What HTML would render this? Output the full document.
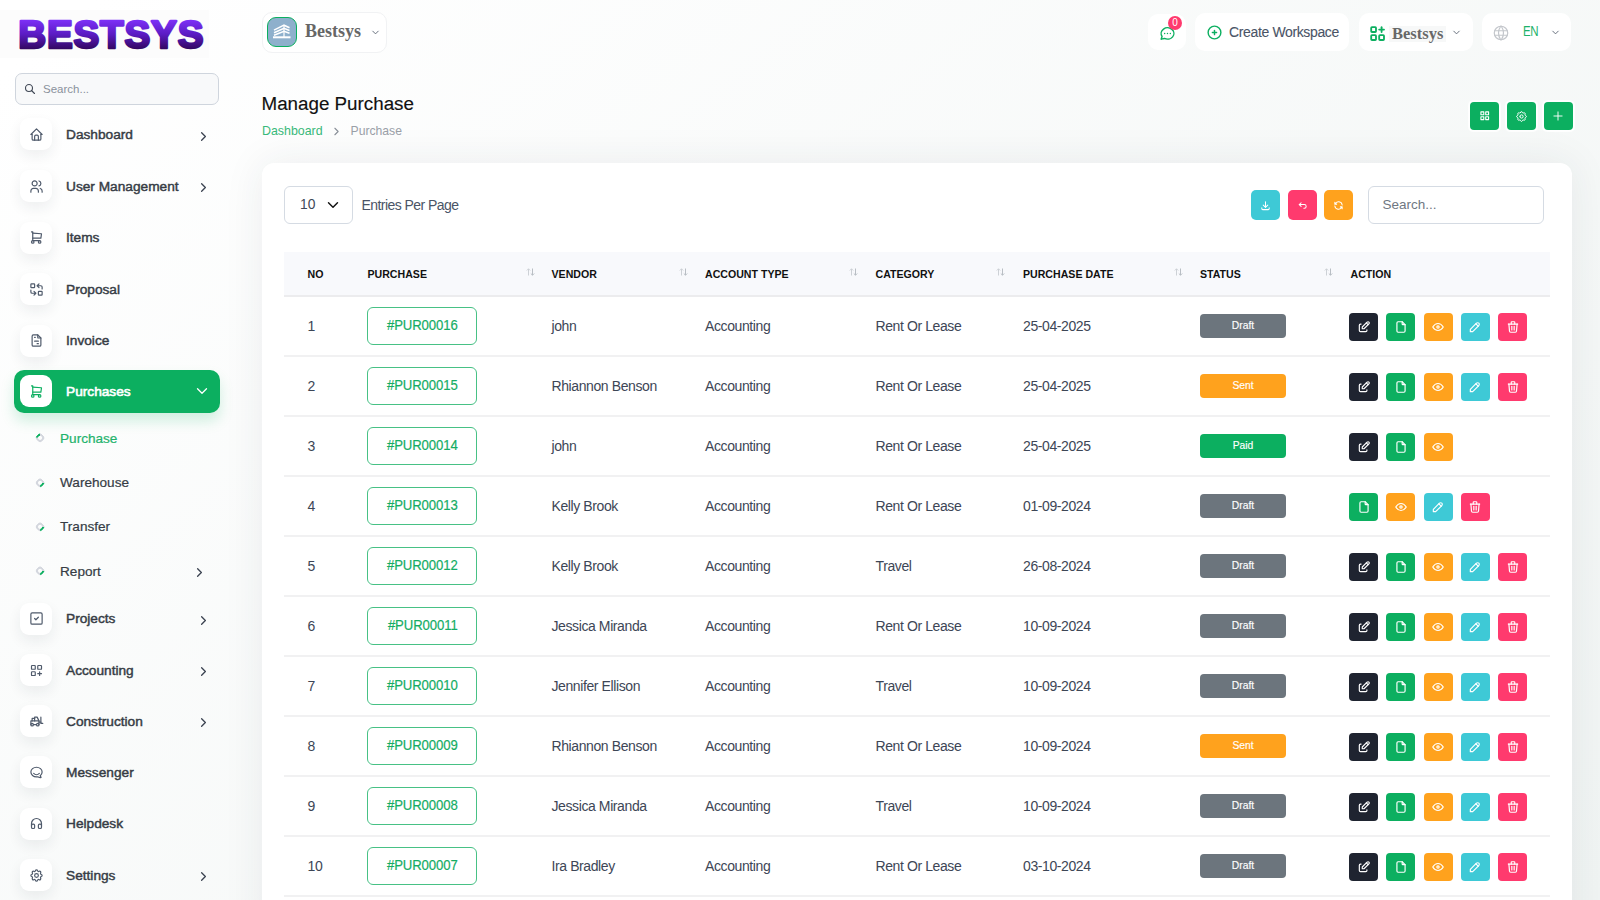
<!DOCTYPE html>
<html><head><meta charset="utf-8"><title>Manage Purchase</title>
<style>
*{box-sizing:border-box;margin:0;padding:0}
html,body{width:1600px;height:900px;overflow:hidden}
body{font-family:"Liberation Sans",sans-serif;position:relative;
 background:linear-gradient(141.55deg,#ffffff 3.46%,#f0f4f3 99.86%);color:#293240}
.abs{position:absolute}
.ic{position:absolute;display:block}
.txt{position:absolute;white-space:nowrap;line-height:1}
.navbox{position:absolute;left:20px;width:32px;height:32px;background:#fff;border-radius:9px;
 box-shadow:0 6px 14px rgba(30,40,60,.07)}
.navt{position:absolute;left:66px;font-size:13.7px;font-weight:400;-webkit-text-stroke:0.45px currentColor;color:#363c45;white-space:nowrap;line-height:1}
.subt{position:absolute;left:60px;font-size:13.6px;-webkit-text-stroke:0.2px currentColor;color:#363c45;white-space:nowrap;line-height:1}
.bul{position:absolute;left:36.3px;width:7.7px;height:7.7px;border-radius:50%;border:2px solid #d4d7de;border-bottom-color:#0caf60;transform:rotate(-45deg)}
.bul.act{border-bottom-color:#d4d7de;border-top-color:#0caf60}
.tbox{position:absolute;background:#fff;border-radius:10px}
.card{position:absolute;left:261.7px;top:163px;width:1310.8px;height:800px;background:#fff;border-radius:12px;
 box-shadow:0 0 40px rgba(40,50,70,.08)}
.th{position:absolute;top:269px;font-size:10.6px;font-weight:700;color:#111;letter-spacing:0;white-space:nowrap;line-height:1}
.sort{position:absolute;top:266px;font-size:9px;color:#c2c6cc;letter-spacing:-1px;line-height:1}
.td{position:absolute;font-size:14px;letter-spacing:-0.4px;color:#3d4656;white-space:nowrap;line-height:1}
.pur{position:absolute;left:367.3px;width:110px;height:38px;border:1px solid #47c185;border-radius:6px;
 color:#14ad64;font-size:14.6px;letter-spacing:-0.1px;text-align:center;line-height:35px;-webkit-text-stroke:0.2px currentColor}
.badge{position:absolute;left:1200px;width:86px;height:24px;border-radius:4px;color:#fff;font-size:10.3px;font-weight:400;-webkit-text-stroke:0.15px #fff;text-align:center;line-height:24px}
.ab{position:absolute;width:29px;height:28px;border-radius:4px}
.sep{position:absolute;left:284px;width:1266px;height:2px;background:#f1f1f2}
</style></head><body>

<div class="abs" style="left:0;top:10px;width:209px;height:48px;background:#fcfcfc"></div>
<svg class="ic" style="left:0;top:0;width:230px;height:70px" viewBox="0 0 230 70"><defs><linearGradient id="lg" x1="0" y1="20" x2="0" y2="49" gradientUnits="userSpaceOnUse"><stop offset="0" stop-color="#7d30f7"/><stop offset="0.5" stop-color="#5a1bc2"/><stop offset="1" stop-color="#330862"/></linearGradient></defs><text x="18.2" y="47.5" font-family="Liberation Sans" font-weight="700" font-size="38.6" letter-spacing="0.85" fill="url(#lg)" stroke="url(#lg)" stroke-width="2.6" stroke-linejoin="round">BESTSYS</text></svg>
<div class="abs" style="left:15px;top:73px;width:204px;height:32px;background:#f8f9fa;border:1px solid #cfd5dd;border-radius:7px"></div>
<svg class="ic" style="left:24px;top:83px;width:12px;height:12px;" viewBox="0 0 24 24" fill="none" stroke="#3f4754" stroke-width="2.2" stroke-linecap="round" stroke-linejoin="round"><path d="M3 10a7 7 0 1 0 14 0a7 7 0 1 0 -14 0"/><path d="M21 21l-6 -6"/></svg>
<div class="txt" style="left:43px;top:84px;font-size:11.5px;color:#8a919c">Search...</div>
<div class="navbox" style="top:118.4px"></div>
<svg class="ic" style="left:29px;top:126.9px;width:15px;height:15px;" viewBox="0 0 24 24" fill="none" stroke="#4f5a6b" stroke-width="1.9" stroke-linecap="round" stroke-linejoin="round"><path d="M5 12l-2 0l9 -9l9 9l-2 0"/><path d="M5 12v7a2 2 0 0 0 2 2h10a2 2 0 0 0 2 -2v-7"/><path d="M9 21v-6a2 2 0 0 1 2 -2h2a2 2 0 0 1 2 2v6"/></svg>
<div class="navt" style="top:127.9px">Dashboard</div>
<svg class="ic" style="left:195.5px;top:128.5px;width:15px;height:15px;" viewBox="0 0 24 24" fill="none" stroke="#3a4250" stroke-width="2.1" stroke-linecap="round" stroke-linejoin="round"><path d="M9 6l6 6l-6 6"/></svg>
<div class="navbox" style="top:170.0px"></div>
<svg class="ic" style="left:29px;top:178.5px;width:15px;height:15px;" viewBox="0 0 24 24" fill="none" stroke="#4f5a6b" stroke-width="1.9" stroke-linecap="round" stroke-linejoin="round"><path d="M5 7a4 4 0 1 0 8 0a4 4 0 1 0 -8 0"/><path d="M3 21v-2a4 4 0 0 1 4 -4h4a4 4 0 0 1 4 4v2"/><path d="M16 3.13a4 4 0 0 1 0 7.75"/><path d="M21 21v-2a4 4 0 0 0 -3 -3.85"/></svg>
<div class="navt" style="top:179.5px">User Management</div>
<svg class="ic" style="left:195.5px;top:180.1px;width:15px;height:15px;" viewBox="0 0 24 24" fill="none" stroke="#3a4250" stroke-width="2.1" stroke-linecap="round" stroke-linejoin="round"><path d="M9 6l6 6l-6 6"/></svg>
<div class="navbox" style="top:221.5px"></div>
<svg class="ic" style="left:29px;top:230.0px;width:15px;height:15px;" viewBox="0 0 24 24" fill="none" stroke="#4f5a6b" stroke-width="1.9" stroke-linecap="round" stroke-linejoin="round"><path d="M4 19a2 2 0 1 0 4 0a2 2 0 1 0 -4 0"/><path d="M15 19a2 2 0 1 0 4 0a2 2 0 1 0 -4 0"/><path d="M17 17h-11v-14h-2"/><path d="M6 5l14 1l-1 7h-13"/></svg>
<div class="navt" style="top:231.0px">Items</div>
<div class="navbox" style="top:273.0px"></div>
<svg class="ic" style="left:29px;top:281.5px;width:15px;height:15px;" viewBox="0 0 24 24" fill="none" stroke="#4f5a6b" stroke-width="1.9" stroke-linecap="round" stroke-linejoin="round"><path d="M3 4a1 1 0 0 1 1 -1h4a1 1 0 0 1 1 1v4a1 1 0 0 1 -1 1h-4a1 1 0 0 1 -1 -1z"/><path d="M15 16a1 1 0 0 1 1 -1h4a1 1 0 0 1 1 1v4a1 1 0 0 1 -1 1h-4a1 1 0 0 1 -1 -1z"/><path d="M21 11v-3a2 2 0 0 0 -2 -2h-6l3 3m0 -6l-3 3"/><path d="M3 13v3a2 2 0 0 0 2 2h6l-3 -3m0 6l3 -3"/></svg>
<div class="navt" style="top:282.5px">Proposal</div>
<div class="navbox" style="top:324.5px"></div>
<svg class="ic" style="left:29px;top:333.0px;width:15px;height:15px;" viewBox="0 0 24 24" fill="none" stroke="#4f5a6b" stroke-width="1.9" stroke-linecap="round" stroke-linejoin="round"><path d="M14 3v4a1 1 0 0 0 1 1h4"/><path d="M17 21h-10a2 2 0 0 1 -2 -2v-14a2 2 0 0 1 2 -2h7l5 5v11a2 2 0 0 1 -2 2z"/><path d="M9 7l1 0"/><path d="M9 13l6 0"/><path d="M13 17l2 0"/></svg>
<div class="navt" style="top:334.0px">Invoice</div>
<div class="navbox" style="top:602.6px"></div>
<svg class="ic" style="left:29px;top:611.1px;width:15px;height:15px;" viewBox="0 0 24 24" fill="none" stroke="#4f5a6b" stroke-width="1.9" stroke-linecap="round" stroke-linejoin="round"><path d="M3 5a2 2 0 0 1 2 -2h14a2 2 0 0 1 2 2v14a2 2 0 0 1 -2 2h-14a2 2 0 0 1 -2 -2z"/><path d="M9 12l2 2l4 -4"/></svg>
<div class="navt" style="top:612.1px">Projects</div>
<svg class="ic" style="left:195.5px;top:612.7px;width:15px;height:15px;" viewBox="0 0 24 24" fill="none" stroke="#3a4250" stroke-width="2.1" stroke-linecap="round" stroke-linejoin="round"><path d="M9 6l6 6l-6 6"/></svg>
<div class="navbox" style="top:654.0px"></div>
<svg class="ic" style="left:29px;top:662.5px;width:15px;height:15px;" viewBox="0 0 24 24" fill="none" stroke="#4f5a6b" stroke-width="1.9" stroke-linecap="round" stroke-linejoin="round"><path d="M4 5a1 1 0 0 1 1 -1h4a1 1 0 0 1 1 1v4a1 1 0 0 1 -1 1h-4a1 1 0 0 1 -1 -1z"/><path d="M14 5a1 1 0 0 1 1 -1h4a1 1 0 0 1 1 1v4a1 1 0 0 1 -1 1h-4a1 1 0 0 1 -1 -1z"/><path d="M4 15a1 1 0 0 1 1 -1h4a1 1 0 0 1 1 1v4a1 1 0 0 1 -1 1h-4a1 1 0 0 1 -1 -1z"/><path d="M14 17h6m-3 -3v6"/></svg>
<div class="navt" style="top:663.5px">Accounting</div>
<svg class="ic" style="left:195.5px;top:664.1px;width:15px;height:15px;" viewBox="0 0 24 24" fill="none" stroke="#3a4250" stroke-width="2.1" stroke-linecap="round" stroke-linejoin="round"><path d="M9 6l6 6l-6 6"/></svg>
<div class="navbox" style="top:705.3px"></div>
<svg class="ic" style="left:29px;top:713.8px;width:15px;height:15px;" viewBox="0 0 24 24" fill="none" stroke="#4f5a6b" stroke-width="1.9" stroke-linecap="round" stroke-linejoin="round"><path d="M3 17a2 2 0 1 0 4 0a2 2 0 1 0 -4 0"/><path d="M12 17a2 2 0 1 0 4 0a2 2 0 1 0 -4 0"/><path d="M7 17l5 0"/><path d="M3 17v-6h13v6"/><path d="M5 11v-4h4"/><path d="M9 11v-6h4l3 6"/><path d="M22 15h-3v-10"/><path d="M16 13l3 0"/></svg>
<div class="navt" style="top:714.8px">Construction</div>
<svg class="ic" style="left:195.5px;top:715.4px;width:15px;height:15px;" viewBox="0 0 24 24" fill="none" stroke="#3a4250" stroke-width="2.1" stroke-linecap="round" stroke-linejoin="round"><path d="M9 6l6 6l-6 6"/></svg>
<div class="navbox" style="top:756.4px"></div>
<svg class="ic" style="left:29px;top:764.9px;width:15px;height:15px;" viewBox="0 0 24 24" fill="none" stroke="#4f5a6b" stroke-width="1.9" stroke-linecap="round" stroke-linejoin="round"><path d="M17.802 17.292s.077 -.055 .2 -.149c1.843 -1.425 3 -3.49 3 -5.789c0 -4.286 -4.03 -7.764 -9 -7.764c-4.97 0 -9 3.478 -9 7.764c0 4.288 4.03 7.646 9 7.646c.424 0 1.12 -.028 2.088 -.084c1.262 .82 3.104 1.493 4.716 1.493c.499 0 .734 -.41 .414 -.828c-.486 -.596 -1.156 -1.551 -1.416 -2.29z"/><path d="M7.5 13.5c2.5 2.5 6.5 2.5 9 0"/></svg>
<div class="navt" style="top:765.9px">Messenger</div>
<div class="navbox" style="top:807.6px"></div>
<svg class="ic" style="left:29px;top:816.1px;width:15px;height:15px;" viewBox="0 0 24 24" fill="none" stroke="#4f5a6b" stroke-width="1.9" stroke-linecap="round" stroke-linejoin="round"><path d="M4 15a2 2 0 0 1 2 -2h1a2 2 0 0 1 2 2v3a2 2 0 0 1 -2 2h-1a2 2 0 0 1 -2 -2z"/><path d="M15 15a2 2 0 0 1 2 -2h1a2 2 0 0 1 2 2v3a2 2 0 0 1 -2 2h-1a2 2 0 0 1 -2 -2z"/><path d="M4 15v-3a8 8 0 0 1 16 0v3"/></svg>
<div class="navt" style="top:817.1px">Helpdesk</div>
<div class="navbox" style="top:859.0px"></div>
<svg class="ic" style="left:29px;top:867.5px;width:15px;height:15px;" viewBox="0 0 24 24" fill="none" stroke="#4f5a6b" stroke-width="1.9" stroke-linecap="round" stroke-linejoin="round"><path d="M10.325 4.317c.426 -1.756 2.924 -1.756 3.35 0a1.724 1.724 0 0 0 2.573 1.066c1.543 -.94 3.31 .826 2.37 2.37a1.724 1.724 0 0 0 1.065 2.572c1.756 .426 1.756 2.924 0 3.35a1.724 1.724 0 0 0 -1.066 2.573c.94 1.543 -.826 3.31 -2.37 2.37a1.724 1.724 0 0 0 -2.572 1.065c-.426 1.756 -2.924 1.756 -3.35 0a1.724 1.724 0 0 0 -2.573 -1.066c-1.543 .94 -3.31 -.826 -2.37 -2.37a1.724 1.724 0 0 0 -1.065 -2.572c-1.756 -.426 -1.756 -2.924 0 -3.35a1.724 1.724 0 0 0 1.066 -2.573c-.94 -1.543 .826 -3.31 2.37 -2.37c1 .608 2.296 .07 2.572 -1.065z"/><path d="M9 12a3 3 0 1 0 6 0a3 3 0 0 0 -6 0"/></svg>
<div class="navt" style="top:868.5px">Settings</div>
<svg class="ic" style="left:195.5px;top:869.1px;width:15px;height:15px;" viewBox="0 0 24 24" fill="none" stroke="#3a4250" stroke-width="2.1" stroke-linecap="round" stroke-linejoin="round"><path d="M9 6l6 6l-6 6"/></svg>
<div class="abs" style="left:14px;top:369.5px;width:206px;height:43.5px;background:#0caf60;border-radius:10px;box-shadow:0 8px 14px rgba(12,175,96,.18)"></div>
<div class="abs" style="left:20px;top:375px;width:32px;height:32px;background:#fff;border-radius:9px"></div>
<svg class="ic" style="left:29px;top:383.5px;width:15px;height:15px;" viewBox="0 0 24 24" fill="none" stroke="#0caf60" stroke-width="1.9" stroke-linecap="round" stroke-linejoin="round"><path d="M4 19a2 2 0 1 0 4 0a2 2 0 1 0 -4 0"/><path d="M15 19a2 2 0 1 0 4 0a2 2 0 1 0 -4 0"/><path d="M17 17h-11v-14h-2"/><path d="M6 5l14 1l-1 7h-13"/></svg>
<div class="navt" style="top:384.5px;color:#fff;-webkit-text-stroke:0.6px #fff">Purchases</div>
<svg class="ic" style="left:193.3px;top:382.4px;width:18px;height:18px;" viewBox="0 0 24 24" fill="none" stroke="#ffffff" stroke-width="1.7" stroke-linecap="round" stroke-linejoin="round"><path d="M6 9l6 6l6 -6"/></svg>
<div class="bul act" style="top:434.1px"></div>
<div class="subt" style="top:431.5px;color:#1fb36c">Purchase</div>
<div class="bul" style="top:478.6px"></div>
<div class="subt" style="top:476.0px;color:#363c45">Warehouse</div>
<div class="bul" style="top:522.6px"></div>
<div class="subt" style="top:520.0px;color:#363c45">Transfer</div>
<div class="bul" style="top:567.1px"></div>
<div class="subt" style="top:564.5px;color:#363c45">Report</div>
<svg class="ic" style="left:191.5px;top:564.8px;width:15px;height:15px;" viewBox="0 0 24 24" fill="none" stroke="#3a4250" stroke-width="2.1" stroke-linecap="round" stroke-linejoin="round"><path d="M9 6l6 6l-6 6"/></svg>
<div class="tbox" style="left:262px;top:11.5px;width:125px;height:41px;border:1px solid #f1f2f4"></div>
<div class="abs" style="left:267px;top:16.8px;width:30.3px;height:30.4px;background:#8eb0cc;border:1.6px solid #0caf60;border-radius:9px"></div>
<svg class="ic" style="left:264px;top:14px;width:36px;height:36px" viewBox="264 14 36 36" fill="none" stroke="#fff" stroke-linecap="butt"><path d="M274 30.2L284 25.2L289.5 27.8" stroke-width="1.5"/><path d="M274 32.8L284 28.2L289.5 30.5" stroke-width="1.5"/><path d="M274 35.2L284 31.2L289.5 33.2" stroke-width="1.5"/><path d="M284 25.2V37" stroke-width="1.2"/><rect x="273" y="36.3" width="17.5" height="2" fill="#fff" stroke="none"/></svg>
<div class="txt" style="left:305px;top:22px;font-family:'Liberation Serif',serif;font-weight:700;font-size:18px;color:#666;line-height:18px">Bestsys</div>
<svg class="ic" style="left:369.5px;top:27px;width:11px;height:11px;" viewBox="0 0 24 24" fill="none" stroke="#5b6573" stroke-width="2" stroke-linecap="round" stroke-linejoin="round"><path d="M6 9l6 6l6 -6"/></svg>
<div class="tbox" style="left:1148px;top:14px;width:38px;height:36px"></div>
<svg class="ic" style="left:1158.5px;top:24.7px;width:17px;height:17px;" viewBox="0 0 24 24" fill="none" stroke="#0caf60" stroke-width="2" stroke-linecap="round" stroke-linejoin="round"><path d="M3 20l1.3 -3.9c-2.324 -3.437 -1.426 -7.872 2.1 -10.374c3.526 -2.501 8.59 -2.296 11.845 .48c3.255 2.777 3.695 7.266 1.029 10.501c-2.666 3.235 -7.615 4.215 -11.574 2.293l-4.7 1"/><path d="M12 12l0 .01"/><path d="M8 12l0 .01"/><path d="M16 12l0 .01"/></svg>
<div class="abs" style="left:1168px;top:15.8px;width:14px;height:14px;border-radius:50%;background:#ff3a6e;color:#fff;font-size:10px;text-align:center;line-height:14px">0</div>
<div class="tbox" style="left:1195px;top:13px;width:154px;height:38px"></div>
<svg class="ic" style="left:1206px;top:24px;width:17px;height:17px;" viewBox="0 0 24 24" fill="none" stroke="#0caf60" stroke-width="2" stroke-linecap="round" stroke-linejoin="round"><path d="M3 12a9 9 0 1 0 18 0a9 9 0 0 0 -18 0"/><path d="M9 12h6"/><path d="M12 9v6"/></svg>
<div class="txt" style="left:1229px;top:25px;font-size:14px;letter-spacing:-0.36px;color:#4a5466;-webkit-text-stroke:0.1px #4a5466">Create Workspace</div>
<div class="tbox" style="left:1359px;top:13px;width:114px;height:38px"></div>
<svg class="ic" style="left:1368.1px;top:23.6px;width:19.2px;height:19.2px;" viewBox="0 0 24 24" fill="none" stroke="#0caf60" stroke-width="2.3" stroke-linecap="round" stroke-linejoin="round"><path d="M4 5a1 1 0 0 1 1 -1h4a1 1 0 0 1 1 1v4a1 1 0 0 1 -1 1h-4a1 1 0 0 1 -1 -1z"/><path d="M4 15a1 1 0 0 1 1 -1h4a1 1 0 0 1 1 1v4a1 1 0 0 1 -1 1h-4a1 1 0 0 1 -1 -1z"/><path d="M14 15a1 1 0 0 1 1 -1h4a1 1 0 0 1 1 1v4a1 1 0 0 1 -1 1h-4a1 1 0 0 1 -1 -1z"/><path d="M14 7l6 0"/><path d="M17 4l0 6"/></svg>
<div class="abs" style="left:1389px;top:26px;width:56.5px;height:16px;background:#f7f8f8"></div>
<div class="txt" style="left:1392px;top:24.6px;font-family:'Liberation Serif',serif;font-weight:700;font-size:16.5px;color:#686868;line-height:18px">Bestsys</div>
<svg class="ic" style="left:1450.5px;top:27px;width:11px;height:11px;" viewBox="0 0 24 24" fill="none" stroke="#5b6573" stroke-width="2" stroke-linecap="round" stroke-linejoin="round"><path d="M6 9l6 6l6 -6"/></svg>
<div class="tbox" style="left:1482px;top:13px;width:89px;height:38px"></div>
<svg class="ic" style="left:1492px;top:23.5px;width:18px;height:18px;" viewBox="0 0 24 24" fill="none" stroke="#c4c7cc" stroke-width="1.6" stroke-linecap="round" stroke-linejoin="round"><path d="M3 12a9 9 0 1 0 18 0a9 9 0 0 0 -18 0"/><path d="M3.6 9h16.8"/><path d="M3.6 15h16.8"/><path d="M11.5 3a17 17 0 0 0 0 18"/><path d="M12.5 3a17 17 0 0 1 0 18"/></svg>
<div class="txt" style="left:1522.5px;top:24px;font-size:14px;letter-spacing:-0.5px;transform:scaleX(0.82);transform-origin:0 0;color:#1db26a">EN</div>
<svg class="ic" style="left:1549.5px;top:27px;width:11px;height:11px;" viewBox="0 0 24 24" fill="none" stroke="#5b6573" stroke-width="2" stroke-linecap="round" stroke-linejoin="round"><path d="M6 9l6 6l6 -6"/></svg>
<div class="txt" style="left:261.5px;top:94px;font-size:18.8px;color:#111;line-height:19px;-webkit-text-stroke:0.15px #111">Manage Purchase</div>
<div class="txt" style="left:262px;top:125px;font-size:12.4px;color:#39b97a">Dashboard</div>
<svg class="ic" style="left:329.5px;top:124.5px;width:13px;height:13px;" viewBox="0 0 24 24" fill="none" stroke="#8a9099" stroke-width="2" stroke-linecap="round" stroke-linejoin="round"><path d="M9 6l6 6l-6 6"/></svg>
<div class="txt" style="left:350.5px;top:125px;font-size:12.2px;color:#9aa0a8">Purchase</div>
<div class="abs" style="left:1470px;top:102px;width:29px;height:28px;background:#0caf60;border-radius:4px;box-shadow:0 0 1px 1.5px rgba(255,255,255,.9)"></div>
<svg class="ic" style="left:1479px;top:110px;width:11.5px;height:11.5px;" viewBox="0 0 24 24" fill="none" stroke="#fff" stroke-width="2.3" stroke-linecap="round" stroke-linejoin="round"><path d="M4 4h6v6h-6z"/><path d="M14 4h6v6h-6z"/><path d="M4 14h6v6h-6z"/><path d="M14 14h6v6h-6z"/></svg>
<div class="abs" style="left:1507px;top:102px;width:29px;height:28px;background:#0caf60;border-radius:4px;box-shadow:0 0 1px 1.5px rgba(255,255,255,.9)"></div>
<svg class="ic" style="left:1515px;top:109.5px;width:13px;height:13px;" viewBox="0 0 24 24" fill="none" stroke="#fff" stroke-width="1.8" stroke-linecap="round" stroke-linejoin="round"><path d="M10.325 4.317c.426 -1.756 2.924 -1.756 3.35 0a1.724 1.724 0 0 0 2.573 1.066c1.543 -.94 3.31 .826 2.37 2.37a1.724 1.724 0 0 0 1.065 2.572c1.756 .426 1.756 2.924 0 3.35a1.724 1.724 0 0 0 -1.066 2.573c.94 1.543 -.826 3.31 -2.37 2.37a1.724 1.724 0 0 0 -2.572 1.065c-.426 1.756 -2.924 1.756 -3.35 0a1.724 1.724 0 0 0 -2.573 -1.066c-1.543 .94 -3.31 -.826 -2.37 -2.37a1.724 1.724 0 0 0 -1.065 -2.572c-1.756 -.426 -1.756 -2.924 0 -3.35a1.724 1.724 0 0 0 1.066 -2.573c-.94 -1.543 .826 -3.31 2.37 -2.37c1 .608 2.296 .07 2.572 -1.065z"/><path d="M9 12a3 3 0 1 0 6 0a3 3 0 0 0 -6 0"/></svg>
<div class="abs" style="left:1543.5px;top:102px;width:29px;height:28px;background:#0caf60;border-radius:4px;box-shadow:0 0 1px 1.5px rgba(255,255,255,.9)"></div>
<svg class="ic" style="left:1551.0px;top:109px;width:14px;height:14px;" viewBox="0 0 24 24" fill="none" stroke="#fff" stroke-width="1.6" stroke-linecap="round" stroke-linejoin="round"><path d="M12 5l0 14"/><path d="M5 12l14 0"/></svg>
<div class="card"></div>
<div class="abs" style="left:284px;top:186px;width:68.5px;height:38px;border:1px solid #d5dbe3;border-radius:6px;background:#fff"></div>
<div class="txt" style="left:300px;top:198px;font-size:13.8px;color:#3f4858">10</div>
<svg class="ic" style="left:323.5px;top:196px;width:18px;height:18px;" viewBox="0 0 24 24" fill="none" stroke="#111" stroke-width="1.9" stroke-linecap="round" stroke-linejoin="round"><path d="M6 9l6 6l6 -6"/></svg>
<div class="txt" style="left:361.5px;top:197.5px;font-size:14px;letter-spacing:-0.55px;color:#4a5466">Entries Per Page</div>
<div class="abs" style="left:1251px;top:190px;width:29px;height:29.5px;background:#3ec9d6;border-radius:5px"></div>
<svg class="ic" style="left:1260px;top:199.5px;width:11px;height:11px;" viewBox="0 0 24 24" fill="none" stroke="#fff" stroke-width="2.2" stroke-linecap="round" stroke-linejoin="round"><path d="M4 17v2a2 2 0 0 0 2 2h12a2 2 0 0 0 2 -2v-2"/><path d="M7 11l5 5l5 -5"/><path d="M12 4l0 12"/></svg>
<div class="abs" style="left:1287.6px;top:190px;width:29px;height:29.5px;background:#ff3a6e;border-radius:5px"></div>
<svg class="ic" style="left:1296.6px;top:199.5px;width:11px;height:11px;" viewBox="0 0 24 24" fill="none" stroke="#fff" stroke-width="2.2" stroke-linecap="round" stroke-linejoin="round"><path d="M9 14l-4 -4l4 -4"/><path d="M5 10h11a4 4 0 1 1 0 8h-1"/></svg>
<div class="abs" style="left:1324.2px;top:190px;width:29px;height:29.5px;background:#ffa21d;border-radius:5px"></div>
<svg class="ic" style="left:1333.2px;top:199.5px;width:11px;height:11px;" viewBox="0 0 24 24" fill="none" stroke="#fff" stroke-width="2.2" stroke-linecap="round" stroke-linejoin="round"><path d="M20 11a8.1 8.1 0 0 0 -15.5 -2m-.5 -4v4h4"/><path d="M4 13a8.1 8.1 0 0 0 15.5 2m.5 4v-4h-4"/></svg>
<div class="abs" style="left:1367.5px;top:186px;width:176px;height:38px;border:1px solid #d5dbe3;border-radius:6px;background:#fff"></div>
<div class="txt" style="left:1382.5px;top:197.5px;font-size:13.5px;color:#6f7782">Search...</div>
<div class="abs" style="left:284px;top:252px;width:1266px;height:44px;background:#f8f9fc"></div>
<div class="abs" style="left:284px;top:295px;width:1266px;height:1.5px;background:#ececee"></div>
<div class="th" style="left:307.5px">NO</div>
<div class="th" style="left:367.5px">PURCHASE</div>
<svg class="ic" style="left:526px;top:268.3px;width:9px;height:8px" viewBox="0 0 9 8" fill="none" stroke="#cdd1d6" stroke-width="1"><path d="M2.5 7.5V0.8M0.8 2.5L2.5 0.8L4.2 2.5"/><path d="M6.5 0.5V7.2M4.8 5.5L6.5 7.2L8.2 5.5" stroke="#b9bec4"/></svg>
<div class="th" style="left:551.5px">VENDOR</div>
<svg class="ic" style="left:679px;top:268.3px;width:9px;height:8px" viewBox="0 0 9 8" fill="none" stroke="#cdd1d6" stroke-width="1"><path d="M2.5 7.5V0.8M0.8 2.5L2.5 0.8L4.2 2.5"/><path d="M6.5 0.5V7.2M4.8 5.5L6.5 7.2L8.2 5.5" stroke="#b9bec4"/></svg>
<div class="th" style="left:705px">ACCOUNT TYPE</div>
<svg class="ic" style="left:849px;top:268.3px;width:9px;height:8px" viewBox="0 0 9 8" fill="none" stroke="#cdd1d6" stroke-width="1"><path d="M2.5 7.5V0.8M0.8 2.5L2.5 0.8L4.2 2.5"/><path d="M6.5 0.5V7.2M4.8 5.5L6.5 7.2L8.2 5.5" stroke="#b9bec4"/></svg>
<div class="th" style="left:875.5px">CATEGORY</div>
<svg class="ic" style="left:996px;top:268.3px;width:9px;height:8px" viewBox="0 0 9 8" fill="none" stroke="#cdd1d6" stroke-width="1"><path d="M2.5 7.5V0.8M0.8 2.5L2.5 0.8L4.2 2.5"/><path d="M6.5 0.5V7.2M4.8 5.5L6.5 7.2L8.2 5.5" stroke="#b9bec4"/></svg>
<div class="th" style="left:1023px">PURCHASE DATE</div>
<svg class="ic" style="left:1173.5px;top:268.3px;width:9px;height:8px" viewBox="0 0 9 8" fill="none" stroke="#cdd1d6" stroke-width="1"><path d="M2.5 7.5V0.8M0.8 2.5L2.5 0.8L4.2 2.5"/><path d="M6.5 0.5V7.2M4.8 5.5L6.5 7.2L8.2 5.5" stroke="#b9bec4"/></svg>
<div class="th" style="left:1200px">STATUS</div>
<svg class="ic" style="left:1324px;top:268.3px;width:9px;height:8px" viewBox="0 0 9 8" fill="none" stroke="#cdd1d6" stroke-width="1"><path d="M2.5 7.5V0.8M0.8 2.5L2.5 0.8L4.2 2.5"/><path d="M6.5 0.5V7.2M4.8 5.5L6.5 7.2L8.2 5.5" stroke="#b9bec4"/></svg>
<div class="th" style="left:1350.5px">ACTION</div>
<div class="td" style="left:307.5px;top:319.0px">1</div>
<div class="pur" style="top:306.5px"><span style="display:inline-block;transform:scaleX(0.9)">#PUR00016</span></div>
<div class="td" style="left:551.5px;top:319.0px">john</div>
<div class="td" style="left:705px;top:319.0px">Accounting</div>
<div class="td" style="left:875.5px;top:319.0px">Rent Or Lease</div>
<div class="td" style="left:1023px;top:319.0px">25-04-2025</div>
<div class="badge" style="top:314.0px;background:#6c757d">Draft</div>
<div class="ab" style="left:1349.0px;top:312.7px;background:#1f2430"></div>
<svg class="ic" style="left:1356.5px;top:319.6px;width:14px;height:14px;" viewBox="0 0 24 24" fill="none" stroke="#fff" stroke-width="2" stroke-linecap="round" stroke-linejoin="round"><path d="M7 7h-1a2 2 0 0 0 -2 2v9a2 2 0 0 0 2 2h9a2 2 0 0 0 2 -2v-1"/><path d="M20.385 6.585a2.1 2.1 0 0 0 -2.97 -2.97l-8.415 8.385v3h3l8.385 -8.415z"/><path d="M16 5l3 3"/></svg>
<div class="ab" style="left:1386.2px;top:312.7px;background:#0caf60"></div>
<svg class="ic" style="left:1393.75px;top:319.6px;width:14px;height:14px;" viewBox="0 0 24 24" fill="none" stroke="#fff" stroke-width="2" stroke-linecap="round" stroke-linejoin="round"><path d="M14 3v4a1 1 0 0 0 1 1h4"/><path d="M17 21h-10a2 2 0 0 1 -2 -2v-14a2 2 0 0 1 2 -2h7l5 5v11a2 2 0 0 1 -2 2z"/></svg>
<div class="ab" style="left:1423.5px;top:312.7px;background:#ffa21d"></div>
<svg class="ic" style="left:1431.0px;top:319.6px;width:14px;height:14px;" viewBox="0 0 24 24" fill="none" stroke="#fff" stroke-width="2" stroke-linecap="round" stroke-linejoin="round"><path d="M10 12a2 2 0 1 0 4 0a2 2 0 0 0 -4 0"/><path d="M21 12c-2.4 4 -5.4 6 -9 6c-3.6 0 -6.6 -2 -9 -6c2.4 -4 5.4 -6 9 -6c3.6 0 6.6 2 9 6"/></svg>
<div class="ab" style="left:1460.8px;top:312.7px;background:#3ec9d6"></div>
<svg class="ic" style="left:1468.25px;top:319.6px;width:14px;height:14px;" viewBox="0 0 24 24" fill="none" stroke="#fff" stroke-width="2" stroke-linecap="round" stroke-linejoin="round"><path d="M4 20h4l10.5 -10.5a2.828 2.828 0 1 0 -4 -4l-10.5 10.5v4"/><path d="M13.5 6.5l4 4"/></svg>
<div class="ab" style="left:1498.0px;top:312.7px;background:#ff3a6e"></div>
<svg class="ic" style="left:1505.5px;top:319.6px;width:14px;height:14px;" viewBox="0 0 24 24" fill="none" stroke="#fff" stroke-width="2" stroke-linecap="round" stroke-linejoin="round"><path d="M4 7l16 0"/><path d="M10 11l0 6"/><path d="M14 11l0 6"/><path d="M5 7l1 12a2 2 0 0 0 2 2h8a2 2 0 0 0 2 -2l1 -12"/><path d="M9 7v-3a1 1 0 0 1 1 -1h4a1 1 0 0 1 1 1v3"/></svg>
<div class="sep" style="top:355.0px"></div>
<div class="td" style="left:307.5px;top:379.0px">2</div>
<div class="pur" style="top:366.5px"><span style="display:inline-block;transform:scaleX(0.9)">#PUR00015</span></div>
<div class="td" style="left:551.5px;top:379.0px">Rhiannon Benson</div>
<div class="td" style="left:705px;top:379.0px">Accounting</div>
<div class="td" style="left:875.5px;top:379.0px">Rent Or Lease</div>
<div class="td" style="left:1023px;top:379.0px">25-04-2025</div>
<div class="badge" style="top:374.0px;background:#ffa21d">Sent</div>
<div class="ab" style="left:1349.0px;top:372.7px;background:#1f2430"></div>
<svg class="ic" style="left:1356.5px;top:379.6px;width:14px;height:14px;" viewBox="0 0 24 24" fill="none" stroke="#fff" stroke-width="2" stroke-linecap="round" stroke-linejoin="round"><path d="M7 7h-1a2 2 0 0 0 -2 2v9a2 2 0 0 0 2 2h9a2 2 0 0 0 2 -2v-1"/><path d="M20.385 6.585a2.1 2.1 0 0 0 -2.97 -2.97l-8.415 8.385v3h3l8.385 -8.415z"/><path d="M16 5l3 3"/></svg>
<div class="ab" style="left:1386.2px;top:372.7px;background:#0caf60"></div>
<svg class="ic" style="left:1393.75px;top:379.6px;width:14px;height:14px;" viewBox="0 0 24 24" fill="none" stroke="#fff" stroke-width="2" stroke-linecap="round" stroke-linejoin="round"><path d="M14 3v4a1 1 0 0 0 1 1h4"/><path d="M17 21h-10a2 2 0 0 1 -2 -2v-14a2 2 0 0 1 2 -2h7l5 5v11a2 2 0 0 1 -2 2z"/></svg>
<div class="ab" style="left:1423.5px;top:372.7px;background:#ffa21d"></div>
<svg class="ic" style="left:1431.0px;top:379.6px;width:14px;height:14px;" viewBox="0 0 24 24" fill="none" stroke="#fff" stroke-width="2" stroke-linecap="round" stroke-linejoin="round"><path d="M10 12a2 2 0 1 0 4 0a2 2 0 0 0 -4 0"/><path d="M21 12c-2.4 4 -5.4 6 -9 6c-3.6 0 -6.6 -2 -9 -6c2.4 -4 5.4 -6 9 -6c3.6 0 6.6 2 9 6"/></svg>
<div class="ab" style="left:1460.8px;top:372.7px;background:#3ec9d6"></div>
<svg class="ic" style="left:1468.25px;top:379.6px;width:14px;height:14px;" viewBox="0 0 24 24" fill="none" stroke="#fff" stroke-width="2" stroke-linecap="round" stroke-linejoin="round"><path d="M4 20h4l10.5 -10.5a2.828 2.828 0 1 0 -4 -4l-10.5 10.5v4"/><path d="M13.5 6.5l4 4"/></svg>
<div class="ab" style="left:1498.0px;top:372.7px;background:#ff3a6e"></div>
<svg class="ic" style="left:1505.5px;top:379.6px;width:14px;height:14px;" viewBox="0 0 24 24" fill="none" stroke="#fff" stroke-width="2" stroke-linecap="round" stroke-linejoin="round"><path d="M4 7l16 0"/><path d="M10 11l0 6"/><path d="M14 11l0 6"/><path d="M5 7l1 12a2 2 0 0 0 2 2h8a2 2 0 0 0 2 -2l1 -12"/><path d="M9 7v-3a1 1 0 0 1 1 -1h4a1 1 0 0 1 1 1v3"/></svg>
<div class="sep" style="top:415.0px"></div>
<div class="td" style="left:307.5px;top:439.0px">3</div>
<div class="pur" style="top:426.5px"><span style="display:inline-block;transform:scaleX(0.9)">#PUR00014</span></div>
<div class="td" style="left:551.5px;top:439.0px">john</div>
<div class="td" style="left:705px;top:439.0px">Accounting</div>
<div class="td" style="left:875.5px;top:439.0px">Rent Or Lease</div>
<div class="td" style="left:1023px;top:439.0px">25-04-2025</div>
<div class="badge" style="top:434.0px;background:#0caf60">Paid</div>
<div class="ab" style="left:1349.0px;top:432.7px;background:#1f2430"></div>
<svg class="ic" style="left:1356.5px;top:439.6px;width:14px;height:14px;" viewBox="0 0 24 24" fill="none" stroke="#fff" stroke-width="2" stroke-linecap="round" stroke-linejoin="round"><path d="M7 7h-1a2 2 0 0 0 -2 2v9a2 2 0 0 0 2 2h9a2 2 0 0 0 2 -2v-1"/><path d="M20.385 6.585a2.1 2.1 0 0 0 -2.97 -2.97l-8.415 8.385v3h3l8.385 -8.415z"/><path d="M16 5l3 3"/></svg>
<div class="ab" style="left:1386.2px;top:432.7px;background:#0caf60"></div>
<svg class="ic" style="left:1393.75px;top:439.6px;width:14px;height:14px;" viewBox="0 0 24 24" fill="none" stroke="#fff" stroke-width="2" stroke-linecap="round" stroke-linejoin="round"><path d="M14 3v4a1 1 0 0 0 1 1h4"/><path d="M17 21h-10a2 2 0 0 1 -2 -2v-14a2 2 0 0 1 2 -2h7l5 5v11a2 2 0 0 1 -2 2z"/></svg>
<div class="ab" style="left:1423.5px;top:432.7px;background:#ffa21d"></div>
<svg class="ic" style="left:1431.0px;top:439.6px;width:14px;height:14px;" viewBox="0 0 24 24" fill="none" stroke="#fff" stroke-width="2" stroke-linecap="round" stroke-linejoin="round"><path d="M10 12a2 2 0 1 0 4 0a2 2 0 0 0 -4 0"/><path d="M21 12c-2.4 4 -5.4 6 -9 6c-3.6 0 -6.6 -2 -9 -6c2.4 -4 5.4 -6 9 -6c3.6 0 6.6 2 9 6"/></svg>
<div class="sep" style="top:475.0px"></div>
<div class="td" style="left:307.5px;top:499.0px">4</div>
<div class="pur" style="top:486.5px"><span style="display:inline-block;transform:scaleX(0.9)">#PUR00013</span></div>
<div class="td" style="left:551.5px;top:499.0px">Kelly Brook</div>
<div class="td" style="left:705px;top:499.0px">Accounting</div>
<div class="td" style="left:875.5px;top:499.0px">Rent Or Lease</div>
<div class="td" style="left:1023px;top:499.0px">01-09-2024</div>
<div class="badge" style="top:494.0px;background:#6c757d">Draft</div>
<div class="ab" style="left:1349.0px;top:492.7px;background:#0caf60"></div>
<svg class="ic" style="left:1356.5px;top:499.6px;width:14px;height:14px;" viewBox="0 0 24 24" fill="none" stroke="#fff" stroke-width="2" stroke-linecap="round" stroke-linejoin="round"><path d="M14 3v4a1 1 0 0 0 1 1h4"/><path d="M17 21h-10a2 2 0 0 1 -2 -2v-14a2 2 0 0 1 2 -2h7l5 5v11a2 2 0 0 1 -2 2z"/></svg>
<div class="ab" style="left:1386.2px;top:492.7px;background:#ffa21d"></div>
<svg class="ic" style="left:1393.75px;top:499.6px;width:14px;height:14px;" viewBox="0 0 24 24" fill="none" stroke="#fff" stroke-width="2" stroke-linecap="round" stroke-linejoin="round"><path d="M10 12a2 2 0 1 0 4 0a2 2 0 0 0 -4 0"/><path d="M21 12c-2.4 4 -5.4 6 -9 6c-3.6 0 -6.6 -2 -9 -6c2.4 -4 5.4 -6 9 -6c3.6 0 6.6 2 9 6"/></svg>
<div class="ab" style="left:1423.5px;top:492.7px;background:#3ec9d6"></div>
<svg class="ic" style="left:1431.0px;top:499.6px;width:14px;height:14px;" viewBox="0 0 24 24" fill="none" stroke="#fff" stroke-width="2" stroke-linecap="round" stroke-linejoin="round"><path d="M4 20h4l10.5 -10.5a2.828 2.828 0 1 0 -4 -4l-10.5 10.5v4"/><path d="M13.5 6.5l4 4"/></svg>
<div class="ab" style="left:1460.8px;top:492.7px;background:#ff3a6e"></div>
<svg class="ic" style="left:1468.25px;top:499.6px;width:14px;height:14px;" viewBox="0 0 24 24" fill="none" stroke="#fff" stroke-width="2" stroke-linecap="round" stroke-linejoin="round"><path d="M4 7l16 0"/><path d="M10 11l0 6"/><path d="M14 11l0 6"/><path d="M5 7l1 12a2 2 0 0 0 2 2h8a2 2 0 0 0 2 -2l1 -12"/><path d="M9 7v-3a1 1 0 0 1 1 -1h4a1 1 0 0 1 1 1v3"/></svg>
<div class="sep" style="top:535.0px"></div>
<div class="td" style="left:307.5px;top:559.0px">5</div>
<div class="pur" style="top:546.5px"><span style="display:inline-block;transform:scaleX(0.9)">#PUR00012</span></div>
<div class="td" style="left:551.5px;top:559.0px">Kelly Brook</div>
<div class="td" style="left:705px;top:559.0px">Accounting</div>
<div class="td" style="left:875.5px;top:559.0px">Travel</div>
<div class="td" style="left:1023px;top:559.0px">26-08-2024</div>
<div class="badge" style="top:554.0px;background:#6c757d">Draft</div>
<div class="ab" style="left:1349.0px;top:552.7px;background:#1f2430"></div>
<svg class="ic" style="left:1356.5px;top:559.6px;width:14px;height:14px;" viewBox="0 0 24 24" fill="none" stroke="#fff" stroke-width="2" stroke-linecap="round" stroke-linejoin="round"><path d="M7 7h-1a2 2 0 0 0 -2 2v9a2 2 0 0 0 2 2h9a2 2 0 0 0 2 -2v-1"/><path d="M20.385 6.585a2.1 2.1 0 0 0 -2.97 -2.97l-8.415 8.385v3h3l8.385 -8.415z"/><path d="M16 5l3 3"/></svg>
<div class="ab" style="left:1386.2px;top:552.7px;background:#0caf60"></div>
<svg class="ic" style="left:1393.75px;top:559.6px;width:14px;height:14px;" viewBox="0 0 24 24" fill="none" stroke="#fff" stroke-width="2" stroke-linecap="round" stroke-linejoin="round"><path d="M14 3v4a1 1 0 0 0 1 1h4"/><path d="M17 21h-10a2 2 0 0 1 -2 -2v-14a2 2 0 0 1 2 -2h7l5 5v11a2 2 0 0 1 -2 2z"/></svg>
<div class="ab" style="left:1423.5px;top:552.7px;background:#ffa21d"></div>
<svg class="ic" style="left:1431.0px;top:559.6px;width:14px;height:14px;" viewBox="0 0 24 24" fill="none" stroke="#fff" stroke-width="2" stroke-linecap="round" stroke-linejoin="round"><path d="M10 12a2 2 0 1 0 4 0a2 2 0 0 0 -4 0"/><path d="M21 12c-2.4 4 -5.4 6 -9 6c-3.6 0 -6.6 -2 -9 -6c2.4 -4 5.4 -6 9 -6c3.6 0 6.6 2 9 6"/></svg>
<div class="ab" style="left:1460.8px;top:552.7px;background:#3ec9d6"></div>
<svg class="ic" style="left:1468.25px;top:559.6px;width:14px;height:14px;" viewBox="0 0 24 24" fill="none" stroke="#fff" stroke-width="2" stroke-linecap="round" stroke-linejoin="round"><path d="M4 20h4l10.5 -10.5a2.828 2.828 0 1 0 -4 -4l-10.5 10.5v4"/><path d="M13.5 6.5l4 4"/></svg>
<div class="ab" style="left:1498.0px;top:552.7px;background:#ff3a6e"></div>
<svg class="ic" style="left:1505.5px;top:559.6px;width:14px;height:14px;" viewBox="0 0 24 24" fill="none" stroke="#fff" stroke-width="2" stroke-linecap="round" stroke-linejoin="round"><path d="M4 7l16 0"/><path d="M10 11l0 6"/><path d="M14 11l0 6"/><path d="M5 7l1 12a2 2 0 0 0 2 2h8a2 2 0 0 0 2 -2l1 -12"/><path d="M9 7v-3a1 1 0 0 1 1 -1h4a1 1 0 0 1 1 1v3"/></svg>
<div class="sep" style="top:595.0px"></div>
<div class="td" style="left:307.5px;top:619.0px">6</div>
<div class="pur" style="top:606.5px"><span style="display:inline-block;transform:scaleX(0.9)">#PUR00011</span></div>
<div class="td" style="left:551.5px;top:619.0px">Jessica Miranda</div>
<div class="td" style="left:705px;top:619.0px">Accounting</div>
<div class="td" style="left:875.5px;top:619.0px">Rent Or Lease</div>
<div class="td" style="left:1023px;top:619.0px">10-09-2024</div>
<div class="badge" style="top:614.0px;background:#6c757d">Draft</div>
<div class="ab" style="left:1349.0px;top:612.7px;background:#1f2430"></div>
<svg class="ic" style="left:1356.5px;top:619.6px;width:14px;height:14px;" viewBox="0 0 24 24" fill="none" stroke="#fff" stroke-width="2" stroke-linecap="round" stroke-linejoin="round"><path d="M7 7h-1a2 2 0 0 0 -2 2v9a2 2 0 0 0 2 2h9a2 2 0 0 0 2 -2v-1"/><path d="M20.385 6.585a2.1 2.1 0 0 0 -2.97 -2.97l-8.415 8.385v3h3l8.385 -8.415z"/><path d="M16 5l3 3"/></svg>
<div class="ab" style="left:1386.2px;top:612.7px;background:#0caf60"></div>
<svg class="ic" style="left:1393.75px;top:619.6px;width:14px;height:14px;" viewBox="0 0 24 24" fill="none" stroke="#fff" stroke-width="2" stroke-linecap="round" stroke-linejoin="round"><path d="M14 3v4a1 1 0 0 0 1 1h4"/><path d="M17 21h-10a2 2 0 0 1 -2 -2v-14a2 2 0 0 1 2 -2h7l5 5v11a2 2 0 0 1 -2 2z"/></svg>
<div class="ab" style="left:1423.5px;top:612.7px;background:#ffa21d"></div>
<svg class="ic" style="left:1431.0px;top:619.6px;width:14px;height:14px;" viewBox="0 0 24 24" fill="none" stroke="#fff" stroke-width="2" stroke-linecap="round" stroke-linejoin="round"><path d="M10 12a2 2 0 1 0 4 0a2 2 0 0 0 -4 0"/><path d="M21 12c-2.4 4 -5.4 6 -9 6c-3.6 0 -6.6 -2 -9 -6c2.4 -4 5.4 -6 9 -6c3.6 0 6.6 2 9 6"/></svg>
<div class="ab" style="left:1460.8px;top:612.7px;background:#3ec9d6"></div>
<svg class="ic" style="left:1468.25px;top:619.6px;width:14px;height:14px;" viewBox="0 0 24 24" fill="none" stroke="#fff" stroke-width="2" stroke-linecap="round" stroke-linejoin="round"><path d="M4 20h4l10.5 -10.5a2.828 2.828 0 1 0 -4 -4l-10.5 10.5v4"/><path d="M13.5 6.5l4 4"/></svg>
<div class="ab" style="left:1498.0px;top:612.7px;background:#ff3a6e"></div>
<svg class="ic" style="left:1505.5px;top:619.6px;width:14px;height:14px;" viewBox="0 0 24 24" fill="none" stroke="#fff" stroke-width="2" stroke-linecap="round" stroke-linejoin="round"><path d="M4 7l16 0"/><path d="M10 11l0 6"/><path d="M14 11l0 6"/><path d="M5 7l1 12a2 2 0 0 0 2 2h8a2 2 0 0 0 2 -2l1 -12"/><path d="M9 7v-3a1 1 0 0 1 1 -1h4a1 1 0 0 1 1 1v3"/></svg>
<div class="sep" style="top:655.0px"></div>
<div class="td" style="left:307.5px;top:679.0px">7</div>
<div class="pur" style="top:666.5px"><span style="display:inline-block;transform:scaleX(0.9)">#PUR00010</span></div>
<div class="td" style="left:551.5px;top:679.0px">Jennifer Ellison</div>
<div class="td" style="left:705px;top:679.0px">Accounting</div>
<div class="td" style="left:875.5px;top:679.0px">Travel</div>
<div class="td" style="left:1023px;top:679.0px">10-09-2024</div>
<div class="badge" style="top:674.0px;background:#6c757d">Draft</div>
<div class="ab" style="left:1349.0px;top:672.7px;background:#1f2430"></div>
<svg class="ic" style="left:1356.5px;top:679.6px;width:14px;height:14px;" viewBox="0 0 24 24" fill="none" stroke="#fff" stroke-width="2" stroke-linecap="round" stroke-linejoin="round"><path d="M7 7h-1a2 2 0 0 0 -2 2v9a2 2 0 0 0 2 2h9a2 2 0 0 0 2 -2v-1"/><path d="M20.385 6.585a2.1 2.1 0 0 0 -2.97 -2.97l-8.415 8.385v3h3l8.385 -8.415z"/><path d="M16 5l3 3"/></svg>
<div class="ab" style="left:1386.2px;top:672.7px;background:#0caf60"></div>
<svg class="ic" style="left:1393.75px;top:679.6px;width:14px;height:14px;" viewBox="0 0 24 24" fill="none" stroke="#fff" stroke-width="2" stroke-linecap="round" stroke-linejoin="round"><path d="M14 3v4a1 1 0 0 0 1 1h4"/><path d="M17 21h-10a2 2 0 0 1 -2 -2v-14a2 2 0 0 1 2 -2h7l5 5v11a2 2 0 0 1 -2 2z"/></svg>
<div class="ab" style="left:1423.5px;top:672.7px;background:#ffa21d"></div>
<svg class="ic" style="left:1431.0px;top:679.6px;width:14px;height:14px;" viewBox="0 0 24 24" fill="none" stroke="#fff" stroke-width="2" stroke-linecap="round" stroke-linejoin="round"><path d="M10 12a2 2 0 1 0 4 0a2 2 0 0 0 -4 0"/><path d="M21 12c-2.4 4 -5.4 6 -9 6c-3.6 0 -6.6 -2 -9 -6c2.4 -4 5.4 -6 9 -6c3.6 0 6.6 2 9 6"/></svg>
<div class="ab" style="left:1460.8px;top:672.7px;background:#3ec9d6"></div>
<svg class="ic" style="left:1468.25px;top:679.6px;width:14px;height:14px;" viewBox="0 0 24 24" fill="none" stroke="#fff" stroke-width="2" stroke-linecap="round" stroke-linejoin="round"><path d="M4 20h4l10.5 -10.5a2.828 2.828 0 1 0 -4 -4l-10.5 10.5v4"/><path d="M13.5 6.5l4 4"/></svg>
<div class="ab" style="left:1498.0px;top:672.7px;background:#ff3a6e"></div>
<svg class="ic" style="left:1505.5px;top:679.6px;width:14px;height:14px;" viewBox="0 0 24 24" fill="none" stroke="#fff" stroke-width="2" stroke-linecap="round" stroke-linejoin="round"><path d="M4 7l16 0"/><path d="M10 11l0 6"/><path d="M14 11l0 6"/><path d="M5 7l1 12a2 2 0 0 0 2 2h8a2 2 0 0 0 2 -2l1 -12"/><path d="M9 7v-3a1 1 0 0 1 1 -1h4a1 1 0 0 1 1 1v3"/></svg>
<div class="sep" style="top:715.0px"></div>
<div class="td" style="left:307.5px;top:739.0px">8</div>
<div class="pur" style="top:726.5px"><span style="display:inline-block;transform:scaleX(0.9)">#PUR00009</span></div>
<div class="td" style="left:551.5px;top:739.0px">Rhiannon Benson</div>
<div class="td" style="left:705px;top:739.0px">Accounting</div>
<div class="td" style="left:875.5px;top:739.0px">Rent Or Lease</div>
<div class="td" style="left:1023px;top:739.0px">10-09-2024</div>
<div class="badge" style="top:734.0px;background:#ffa21d">Sent</div>
<div class="ab" style="left:1349.0px;top:732.7px;background:#1f2430"></div>
<svg class="ic" style="left:1356.5px;top:739.6px;width:14px;height:14px;" viewBox="0 0 24 24" fill="none" stroke="#fff" stroke-width="2" stroke-linecap="round" stroke-linejoin="round"><path d="M7 7h-1a2 2 0 0 0 -2 2v9a2 2 0 0 0 2 2h9a2 2 0 0 0 2 -2v-1"/><path d="M20.385 6.585a2.1 2.1 0 0 0 -2.97 -2.97l-8.415 8.385v3h3l8.385 -8.415z"/><path d="M16 5l3 3"/></svg>
<div class="ab" style="left:1386.2px;top:732.7px;background:#0caf60"></div>
<svg class="ic" style="left:1393.75px;top:739.6px;width:14px;height:14px;" viewBox="0 0 24 24" fill="none" stroke="#fff" stroke-width="2" stroke-linecap="round" stroke-linejoin="round"><path d="M14 3v4a1 1 0 0 0 1 1h4"/><path d="M17 21h-10a2 2 0 0 1 -2 -2v-14a2 2 0 0 1 2 -2h7l5 5v11a2 2 0 0 1 -2 2z"/></svg>
<div class="ab" style="left:1423.5px;top:732.7px;background:#ffa21d"></div>
<svg class="ic" style="left:1431.0px;top:739.6px;width:14px;height:14px;" viewBox="0 0 24 24" fill="none" stroke="#fff" stroke-width="2" stroke-linecap="round" stroke-linejoin="round"><path d="M10 12a2 2 0 1 0 4 0a2 2 0 0 0 -4 0"/><path d="M21 12c-2.4 4 -5.4 6 -9 6c-3.6 0 -6.6 -2 -9 -6c2.4 -4 5.4 -6 9 -6c3.6 0 6.6 2 9 6"/></svg>
<div class="ab" style="left:1460.8px;top:732.7px;background:#3ec9d6"></div>
<svg class="ic" style="left:1468.25px;top:739.6px;width:14px;height:14px;" viewBox="0 0 24 24" fill="none" stroke="#fff" stroke-width="2" stroke-linecap="round" stroke-linejoin="round"><path d="M4 20h4l10.5 -10.5a2.828 2.828 0 1 0 -4 -4l-10.5 10.5v4"/><path d="M13.5 6.5l4 4"/></svg>
<div class="ab" style="left:1498.0px;top:732.7px;background:#ff3a6e"></div>
<svg class="ic" style="left:1505.5px;top:739.6px;width:14px;height:14px;" viewBox="0 0 24 24" fill="none" stroke="#fff" stroke-width="2" stroke-linecap="round" stroke-linejoin="round"><path d="M4 7l16 0"/><path d="M10 11l0 6"/><path d="M14 11l0 6"/><path d="M5 7l1 12a2 2 0 0 0 2 2h8a2 2 0 0 0 2 -2l1 -12"/><path d="M9 7v-3a1 1 0 0 1 1 -1h4a1 1 0 0 1 1 1v3"/></svg>
<div class="sep" style="top:775.0px"></div>
<div class="td" style="left:307.5px;top:799.0px">9</div>
<div class="pur" style="top:786.5px"><span style="display:inline-block;transform:scaleX(0.9)">#PUR00008</span></div>
<div class="td" style="left:551.5px;top:799.0px">Jessica Miranda</div>
<div class="td" style="left:705px;top:799.0px">Accounting</div>
<div class="td" style="left:875.5px;top:799.0px">Travel</div>
<div class="td" style="left:1023px;top:799.0px">10-09-2024</div>
<div class="badge" style="top:794.0px;background:#6c757d">Draft</div>
<div class="ab" style="left:1349.0px;top:792.7px;background:#1f2430"></div>
<svg class="ic" style="left:1356.5px;top:799.6px;width:14px;height:14px;" viewBox="0 0 24 24" fill="none" stroke="#fff" stroke-width="2" stroke-linecap="round" stroke-linejoin="round"><path d="M7 7h-1a2 2 0 0 0 -2 2v9a2 2 0 0 0 2 2h9a2 2 0 0 0 2 -2v-1"/><path d="M20.385 6.585a2.1 2.1 0 0 0 -2.97 -2.97l-8.415 8.385v3h3l8.385 -8.415z"/><path d="M16 5l3 3"/></svg>
<div class="ab" style="left:1386.2px;top:792.7px;background:#0caf60"></div>
<svg class="ic" style="left:1393.75px;top:799.6px;width:14px;height:14px;" viewBox="0 0 24 24" fill="none" stroke="#fff" stroke-width="2" stroke-linecap="round" stroke-linejoin="round"><path d="M14 3v4a1 1 0 0 0 1 1h4"/><path d="M17 21h-10a2 2 0 0 1 -2 -2v-14a2 2 0 0 1 2 -2h7l5 5v11a2 2 0 0 1 -2 2z"/></svg>
<div class="ab" style="left:1423.5px;top:792.7px;background:#ffa21d"></div>
<svg class="ic" style="left:1431.0px;top:799.6px;width:14px;height:14px;" viewBox="0 0 24 24" fill="none" stroke="#fff" stroke-width="2" stroke-linecap="round" stroke-linejoin="round"><path d="M10 12a2 2 0 1 0 4 0a2 2 0 0 0 -4 0"/><path d="M21 12c-2.4 4 -5.4 6 -9 6c-3.6 0 -6.6 -2 -9 -6c2.4 -4 5.4 -6 9 -6c3.6 0 6.6 2 9 6"/></svg>
<div class="ab" style="left:1460.8px;top:792.7px;background:#3ec9d6"></div>
<svg class="ic" style="left:1468.25px;top:799.6px;width:14px;height:14px;" viewBox="0 0 24 24" fill="none" stroke="#fff" stroke-width="2" stroke-linecap="round" stroke-linejoin="round"><path d="M4 20h4l10.5 -10.5a2.828 2.828 0 1 0 -4 -4l-10.5 10.5v4"/><path d="M13.5 6.5l4 4"/></svg>
<div class="ab" style="left:1498.0px;top:792.7px;background:#ff3a6e"></div>
<svg class="ic" style="left:1505.5px;top:799.6px;width:14px;height:14px;" viewBox="0 0 24 24" fill="none" stroke="#fff" stroke-width="2" stroke-linecap="round" stroke-linejoin="round"><path d="M4 7l16 0"/><path d="M10 11l0 6"/><path d="M14 11l0 6"/><path d="M5 7l1 12a2 2 0 0 0 2 2h8a2 2 0 0 0 2 -2l1 -12"/><path d="M9 7v-3a1 1 0 0 1 1 -1h4a1 1 0 0 1 1 1v3"/></svg>
<div class="sep" style="top:835.0px"></div>
<div class="td" style="left:307.5px;top:859.0px">10</div>
<div class="pur" style="top:846.5px"><span style="display:inline-block;transform:scaleX(0.9)">#PUR00007</span></div>
<div class="td" style="left:551.5px;top:859.0px">Ira Bradley</div>
<div class="td" style="left:705px;top:859.0px">Accounting</div>
<div class="td" style="left:875.5px;top:859.0px">Rent Or Lease</div>
<div class="td" style="left:1023px;top:859.0px">03-10-2024</div>
<div class="badge" style="top:854.0px;background:#6c757d">Draft</div>
<div class="ab" style="left:1349.0px;top:852.7px;background:#1f2430"></div>
<svg class="ic" style="left:1356.5px;top:859.6px;width:14px;height:14px;" viewBox="0 0 24 24" fill="none" stroke="#fff" stroke-width="2" stroke-linecap="round" stroke-linejoin="round"><path d="M7 7h-1a2 2 0 0 0 -2 2v9a2 2 0 0 0 2 2h9a2 2 0 0 0 2 -2v-1"/><path d="M20.385 6.585a2.1 2.1 0 0 0 -2.97 -2.97l-8.415 8.385v3h3l8.385 -8.415z"/><path d="M16 5l3 3"/></svg>
<div class="ab" style="left:1386.2px;top:852.7px;background:#0caf60"></div>
<svg class="ic" style="left:1393.75px;top:859.6px;width:14px;height:14px;" viewBox="0 0 24 24" fill="none" stroke="#fff" stroke-width="2" stroke-linecap="round" stroke-linejoin="round"><path d="M14 3v4a1 1 0 0 0 1 1h4"/><path d="M17 21h-10a2 2 0 0 1 -2 -2v-14a2 2 0 0 1 2 -2h7l5 5v11a2 2 0 0 1 -2 2z"/></svg>
<div class="ab" style="left:1423.5px;top:852.7px;background:#ffa21d"></div>
<svg class="ic" style="left:1431.0px;top:859.6px;width:14px;height:14px;" viewBox="0 0 24 24" fill="none" stroke="#fff" stroke-width="2" stroke-linecap="round" stroke-linejoin="round"><path d="M10 12a2 2 0 1 0 4 0a2 2 0 0 0 -4 0"/><path d="M21 12c-2.4 4 -5.4 6 -9 6c-3.6 0 -6.6 -2 -9 -6c2.4 -4 5.4 -6 9 -6c3.6 0 6.6 2 9 6"/></svg>
<div class="ab" style="left:1460.8px;top:852.7px;background:#3ec9d6"></div>
<svg class="ic" style="left:1468.25px;top:859.6px;width:14px;height:14px;" viewBox="0 0 24 24" fill="none" stroke="#fff" stroke-width="2" stroke-linecap="round" stroke-linejoin="round"><path d="M4 20h4l10.5 -10.5a2.828 2.828 0 1 0 -4 -4l-10.5 10.5v4"/><path d="M13.5 6.5l4 4"/></svg>
<div class="ab" style="left:1498.0px;top:852.7px;background:#ff3a6e"></div>
<svg class="ic" style="left:1505.5px;top:859.6px;width:14px;height:14px;" viewBox="0 0 24 24" fill="none" stroke="#fff" stroke-width="2" stroke-linecap="round" stroke-linejoin="round"><path d="M4 7l16 0"/><path d="M10 11l0 6"/><path d="M14 11l0 6"/><path d="M5 7l1 12a2 2 0 0 0 2 2h8a2 2 0 0 0 2 -2l1 -12"/><path d="M9 7v-3a1 1 0 0 1 1 -1h4a1 1 0 0 1 1 1v3"/></svg>
<div class="sep" style="top:895.0px"></div>
</body></html>
